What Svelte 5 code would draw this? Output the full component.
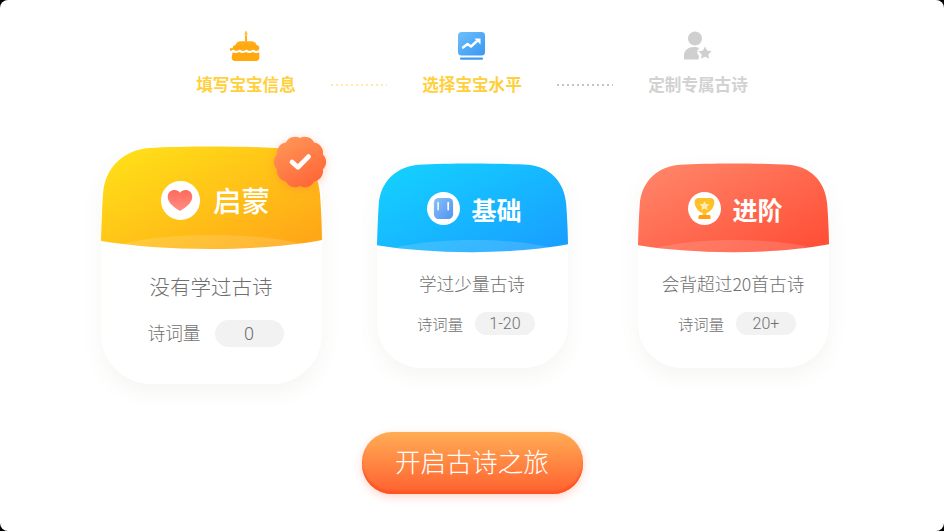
<script>
	const steps = [
		{ label: '填写宝宝信息', icon: 'cake', on: true },
		{ label: '选择宝宝水平', icon: 'chart', on: true },
		{ label: '定制专属古诗', icon: 'person', on: false }
	];

	const levels = [
		{ id: 'yellow', title: '启蒙', desc: '没有学过古诗', count: '0', icon: 'heart', from: '#ffdf18', to: '#ffa717', big: true },
		{ id: 'blue', title: '基础', desc: '学过少量古诗', count: '1-20', icon: 'board', from: '#14d0ff', to: '#19a0ff' },
		{ id: 'red', title: '进阶', desc: '会背超过20首古诗', count: '20+', icon: 'cup', from: '#ff8468', to: '#ff5038' }
	];

	// scalloped edge of the selected badge
	function flower(cx, cy, r, lobes) {
		const arc = r * 0.42;
		let d = '';
		for (let i = 0; i <= lobes; i++) {
			const a = (i / lobes) * Math.PI * 2 - Math.PI / 2;
			const x = (cx + r * Math.cos(a)).toFixed(2);
			const y = (cy + r * Math.sin(a)).toFixed(2);
			d += i ? `A${arc} ${arc} 0 0 1 ${x} ${y} ` : `M${x} ${y} `;
		}
		return d + 'Z';
	}
</script>

<div class="page">
	<div class="steps">
		{#each steps as step, i}
			{#if i > 0}
				<span class="dots" class:gold={i === 1}></span>
			{/if}
			<div class="step" class:on={step.on}>
				{#if step.icon === 'cake'}
					<svg class="step-icon" viewBox="2.5 1 27 30">
						<path d="M16 1.500c1.200 1.800 1.600 3 1.200 4-.3.6-2 .6-2.400 0-.4-1 0-2.200 1.200-4z" fill="#ffc04a" />
						<rect x="15" y="6" width="2" height="6" fill="#ffb020" />
						<path d="M6 16.500c0-3 2-5 5-5h10c3 0 5 2 5 5v1.500H6z" fill="#ffad18" />
						<path d="M3.500 18c0-2 1.500-3 3-3h19c1.500 0 3 1 3 3 0 1.500-1.400 2.500-2.800 2.500-1.200 0-2.200-.5-3-1.200-.8.7-2 1.200-3.200 1.200s-2.300-.5-3.100-1.200c-.8.7-1.800 1.200-3.100 1.200s-2.300-.5-3.100-1.200c-.8.7-1.900 1.200-3.100 1.200-1.200 0-2.200-.5-3-1.200-.8.7-1.800 1.200-3 1.200-1.200 0-2.600-1-2.600-2.500z" fill="#ffa90f" />
						<path d="M3.500 21.800c1 .6 2 .8 3 .8 1.200 0 2.200-.3 3-.9.900.6 2 .9 3.200.9s2.300-.3 3.300-.9c1 .6 2.100.9 3.300.9s2.300-.3 3.200-.9c.8.600 1.800.9 3 .9 1 0 2-.2 3-.8V27c0 1.700-1.300 3-3 3h-20c-1.700 0-3-1.300-3-3z" fill="#ffa90f" />
					</svg>
				{:else if step.icon === 'chart'}
					<svg class="step-icon" viewBox="0 0 32 32">
						<defs>
							<linearGradient id="chart-bg" x1="0" y1="0" x2="1" y2="1">
								<stop offset="0" stop-color="#6cc0fb" />
								<stop offset="1" stop-color="#3a97f2" />
							</linearGradient>
						</defs>
						<rect x="2" y="2" width="27" height="23.500" rx="3.500" fill="url(#chart-bg)" />
						<rect x="4" y="27.500" width="23" height="2.200" rx="1" fill="#3f9cf3" />
						<path d="M7 17.500l4.500-3.500 3.500 2.500 5.500-5" fill="none" stroke="#fff" stroke-width="2.400" stroke-linecap="round" stroke-linejoin="round" />
						<path d="M18.500 8.500h6v6z" fill="#fff" />
					</svg>
				{:else}
					<svg class="step-icon" viewBox="0 0 32 32">
						<circle cx="13" cy="8.500" r="7" fill="#cfcfcf" />
						<path d="M2 29v-3.500c0-5.500 4.500-8.500 10-8.500 1.800 0 3.600.3 5 1l-2 5 2 3-.5 3.500H3c-.6 0-1-.1-1-.5z" fill="#cfcfcf" />
						<path d="M23 15.500l2.400 4.700 5.100.7-3.700 3.600.9 5.100-4.700-2.500-4.700 2.500.9-5.100-3.700-3.600 5.100-.7z" fill="#cfcfcf" stroke="#fff" stroke-width="1" />
					</svg>
				{/if}
				<span class="step-label">{step.label}</span>
			</div>
		{/each}
	</div>

	<div class="levels">
		{#each levels as level}
			<div class="card" class:big={level.big}>
				<div class="head">
					<svg class="head-bg" viewBox="0 0 221 104" preserveAspectRatio="none">
						<defs>
							<linearGradient id={`grad-${level.id}`} x1="0.05" y1="0.1" x2="0.95" y2="0.9">
								<stop offset="0" stop-color={level.from} />
								<stop offset="1" stop-color={level.to} />
							</linearGradient>
						</defs>
						<path d="M0 95C.5 80 1 62 2 48 4 20 24 4 48 2 80 0 140 0 175 2 198 4 217 20 219 48 220 62 221 80 221 94 190 100 150 103 110 103 70 103 30 100 0 95Z" fill={`url(#grad-${level.id})`} />
						<path d="M20 98C48 91.500 80 89 112 89c32 0 62 2.500 90 9-30 3.500-60 5-91 5-31 0-61-1.500-91-5z" fill="#fff" opacity=".14" />
					</svg>
					<span class="mark">
						{#if level.icon === 'heart'}
							<svg viewBox="0 0 24 24">
								<defs>
									<linearGradient id="heart-fill" x1="0" y1="0" x2="0" y2="1">
										<stop offset="0" stop-color="#ff6a5c" />
										<stop offset="1" stop-color="#ff8f84" />
									</linearGradient>
								</defs>
								<path d="M12 21.500C8 19 1.500 15 1.500 9.300 1.500 5.800 4.300 3.500 7.300 3.500c1.900 0 3.700.8 4.700 2.300 1-1.500 2.800-2.300 4.700-2.300 3 0 5.800 2.300 5.800 5.800 0 5.700-6.500 9.700-10.500 12.200z" fill="url(#heart-fill)" />
							</svg>
						{:else if level.icon === 'board'}
							<svg viewBox="0 0 24 24">
								<defs>
									<linearGradient id="board-fill" x1="0" y1="0" x2="1" y2="1">
										<stop offset="0" stop-color="#8ac0f8" />
										<stop offset="1" stop-color="#4f93f2" />
									</linearGradient>
								</defs>
								<rect x="2" y="1" width="20" height="22" rx="5" fill="url(#board-fill)" />
								<rect x="5.500" y="5" width="1.800" height="9" rx=".9" fill="#fff" opacity=".85" />
								<rect x="16" y="5" width="1.800" height="9" rx=".9" fill="#fff" />
							</svg>
						{:else}
							<svg viewBox="2 1 20 21">
								<path d="M3 5.500C3 3.500 4.500 2 6.500 2h11C19.500 2 21 3.500 21 5.500c0 4.800-3.600 9.300-7.300 10v2.500h-3.400v-2.500C6.600 14.800 3 10.300 3 5.500z" fill="#ffc02a" />
								<path d="M6.500 19c0-1 .8-1.500 1.500-1.500h8c.7 0 1.500.5 1.500 1.500v2h-11z" fill="#ffa012" />
								<path d="M12 4.500l1.400 2.800 3.100.4-2.200 2.100.5 3L12 11.400l-2.800 1.400.5-3-2.200-2.100 3.100-.4z" fill="#ffe9b0" />
							</svg>
						{/if}
					</span>
					<span class="title">{level.title}</span>
				</div>
				<div class="desc">{level.desc}</div>
				<div class="meta">
					<span class="meta-label">诗词量</span>
					<span class="pill">{level.count}</span>
				</div>
				{#if level.big}
					<svg class="badge" viewBox="0 0 60 60">
						<defs>
							<linearGradient id="badge-fill" x1="0.2" y1="0" x2="0.8" y2="1">
								<stop offset="0" stop-color="#ff9658" />
								<stop offset="1" stop-color="#ff6436" />
							</linearGradient>
						</defs>
						<path d={flower(30, 30, 22.500, 10)} fill="url(#badge-fill)" />
						<path d="M22.500 30l5.500 5L38 25" fill="none" stroke="#fff" stroke-width="4.500" stroke-linecap="round" stroke-linejoin="round" />
					</svg>
				{/if}
			</div>
		{/each}
	</div>

	<button class="start">开启古诗之旅</button>
</div>

<style>
	:global(body) {
		margin: 0;
		background: #000;
	}

	.page {
		height: 100vh;
		background: #fff;
		border-radius: 8px;
		overflow: hidden;
		display: flex;
		flex-direction: column;
		align-items: center;
		font-family: "Noto Sans CJK SC", "Noto Sans", sans-serif;
	}

	.steps {
		display: flex;
		align-items: flex-start;
		gap: 35px;
		padding-top: 30px;
		height: 112px;
		box-sizing: border-box;
	}

	.step {
		display: flex;
		flex-direction: column;
		align-items: center;
		width: 100px;
		color: #d2d2d2;
	}

	.step.on {
		color: #ffd03c;
	}

	.step-icon {
		width: 32px;
		height: 32px;
	}

	.step-label {
		margin-top: 10px;
		font-size: 16.6px;
		line-height: 24px;
		font-weight: 700;
		white-space: nowrap;
	}

	.dots {
		width: 56px;
		height: 2px;
		margin-top: 54px;
		background: repeating-linear-gradient(90deg, #c4c4c4 0 2px, transparent 2px 5px);
	}

	.dots.gold {
		background: repeating-linear-gradient(90deg, #ffe9a6 0 2px, transparent 2px 5px);
	}

	.levels {
		display: grid;
		grid-template-columns: repeat(3, 261px);
		justify-items: center;
		align-items: center;
		height: 272px;
		margin-top: 17px;
	}

	.card {
		position: relative;
		width: 191px;
		height: 205px;
		background: #fff;
		border-radius: 44px;
		box-shadow: 0 8px 20px rgba(120, 110, 90, 0.07);
		display: flex;
		flex-direction: column;
		align-items: center;
		color: #6f6f6f;
	}

	.card.big {
		width: 221px;
		height: 238px;
		border-radius: 50px;
	}

	.head {
		position: relative;
		align-self: stretch;
		height: 90px;
		padding-top: 2px;
		padding-left: 5px;
		box-sizing: border-box;
		display: flex;
		align-items: center;
		justify-content: center;
		gap: 11px;
		color: #fff;
	}

	.big .head {
		height: 104px;
		padding-top: 4px;
		padding-left: 9px;
		gap: 13px;
	}

	.head-bg {
		position: absolute;
		inset: 0;
		width: 100%;
		height: 100%;
	}

	.mark {
		position: relative;
		width: 33px;
		height: 33px;
		border-radius: 50%;
		background: #fff;
		display: flex;
		align-items: center;
		justify-content: center;
	}

	.mark svg {
		width: 23px;
		height: 23px;
	}

	.big .mark {
		width: 39px;
		height: 39px;
	}

	.big .mark svg {
		width: 28px;
		height: 28px;
	}

	.title {
		position: relative;
		font-size: 25px;
		line-height: 32px;
		font-weight: 700;
	}

	.big .title {
		font-size: 28.500px;
		font-weight: 500;
	}

	.desc {
		margin-top: 17px;
		font-size: 17.700px;
		line-height: 26px;
		font-weight: 300;
		white-space: nowrap;
	}

	.big .desc {
		margin-top: 21px;
		font-size: 20.500px;
		line-height: 30px;
	}

	.meta {
		display: flex;
		align-items: center;
		gap: 12px;
		margin-top: 16px;
		margin-left: 8px;
		font-size: 15.300px;
		font-weight: 300;
	}

	.big .meta {
		gap: 14px;
		margin-top: 19px;
		margin-left: 9px;
		font-size: 17.700px;
	}

	.big .meta-label {
		margin-top: -3px;
	}

	.pill {
		width: 60px;
		height: 23px;
		border-radius: 12px;
		background: #f2f2f2;
		display: flex;
		align-items: center;
		justify-content: center;
		font-family: Roboto, sans-serif;
		font-size: 16px;
	}

	.big .pill {
		width: 69px;
		height: 27px;
		border-radius: 14px;
		font-size: 18px;
	}

	.badge {
		position: absolute;
		top: -16px;
		right: -10px;
		width: 64px;
		height: 64px;
		filter: drop-shadow(0 2px 5px rgba(255, 110, 60, 0.3));
	}

	.start {
		width: 221px;
		height: 62px;
		margin-top: 31px;
		border: 0;
		border-radius: 30px;
		background: linear-gradient(#ffad55, #ff602f);
		box-shadow: inset 0 -3px 2px #ff5424, 0 3px 8px rgba(255, 90, 40, 0.25);
		color: #fff;
		font-family: inherit;
		font-size: 25.700px;
		font-weight: 300;
		padding: 0 0 6px;
	}
</style>
